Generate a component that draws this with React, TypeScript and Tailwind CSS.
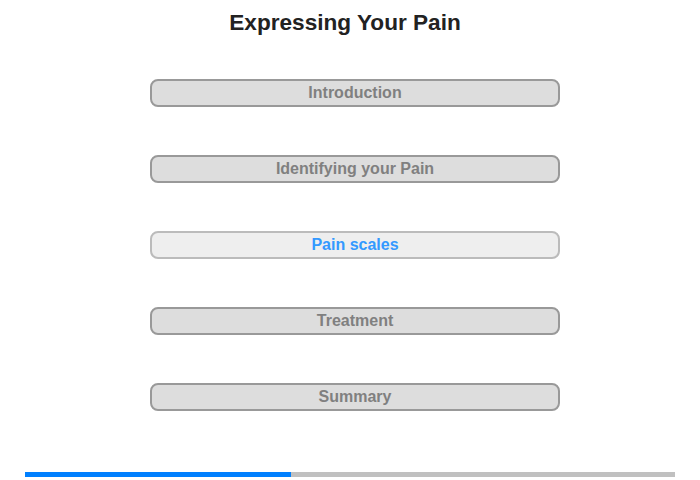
const items = [
  { label: "Introduction", active: false },
  { label: "Identifying your Pain", active: false },
  { label: "Pain scales", active: true },
  { label: "Treatment", active: false },
  { label: "Summary", active: false },
];

const App = () => {
  return (
    <div className="flex flex-col w-[700px] h-[480px] bg-white font-['Liberation_Sans',Arial,sans-serif]">
      <h1 className="pt-[10px] pr-[10px] h-[79px] text-center text-[22.6px] leading-[26px] font-bold text-[#222]">
        Expressing Your Pain
      </h1>

      <div className="flex flex-col items-center gap-[48px] pl-[10px]">
        {items.map((item) =>
          item.active ? (
            <div
              key={item.label}
              className="flex justify-center items-center w-[410px] h-[28px] rounded-[8px] border-2 border-[#bbbbbb] bg-[#eeeeee] text-[16px] font-bold text-[#3399ff]"
            >
              {item.label}
            </div>
          ) : (
            <div
              key={item.label}
              className="flex justify-center items-center w-[410px] h-[28px] rounded-[8px] border-2 border-[#999999] bg-[#dddddd] text-[16px] font-bold text-[#808080]"
            >
              {item.label}
            </div>
          )
        )}
      </div>

      <div className="flex mt-[61px] mx-[25px] h-[5px] bg-[#c0c0c0]">
        <div className="w-[266px] h-full bg-[#0080ff]"></div>
      </div>
    </div>
  );
};

export default App;
